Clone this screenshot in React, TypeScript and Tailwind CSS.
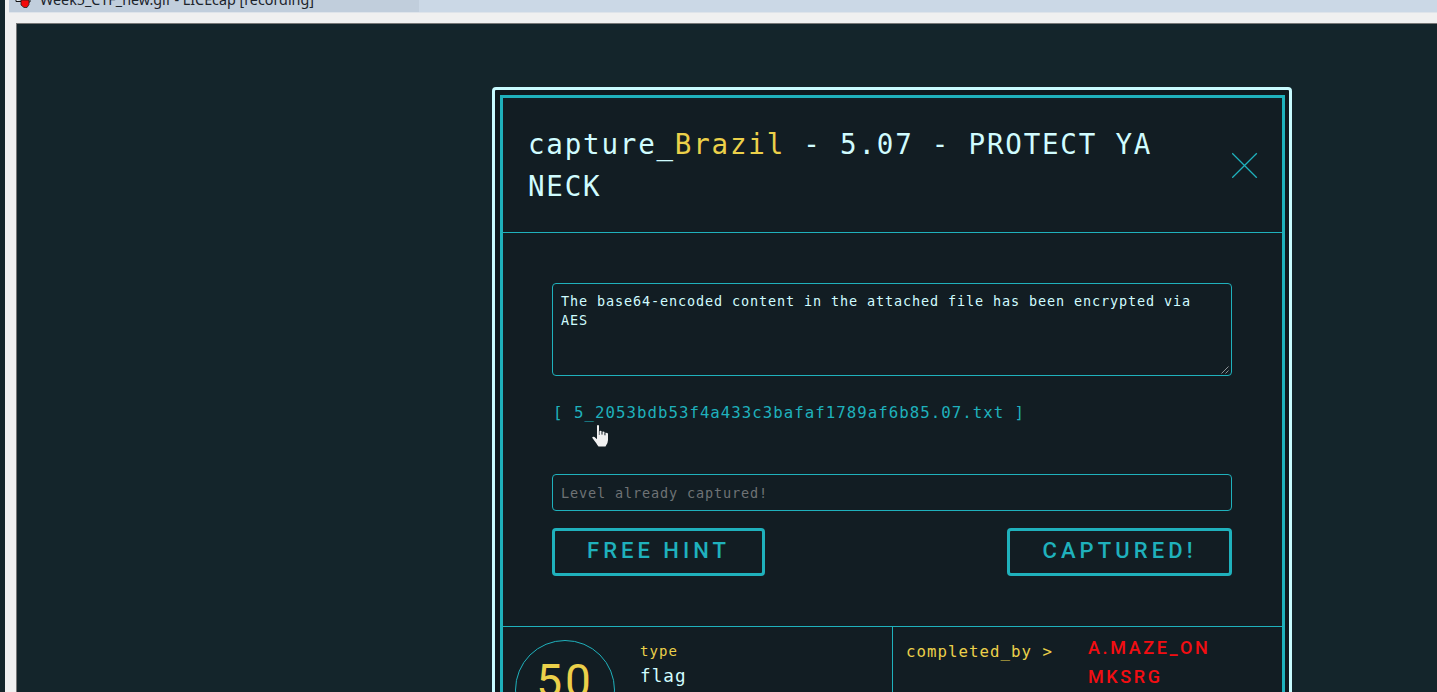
import type { ReactNode } from "react";

const mono = "font-['DejaVu_Sans_Mono','Liberation_Mono',monospace] tracking-[0.0647em]";
const display = "font-['Roboto','Liberation_Sans',sans-serif]";

function TitleBar() {
  return (
    <div className="flex h-[13px] shrink-0 overflow-hidden bg-[#cbd8e6] ml-1 border-b border-[#dfe4ea]">
      <div className="flex w-[410px] gap-[7px] bg-[#c1cedc] pl-[6px] font-['Noto_Sans',sans-serif]">
        <svg width="18" height="10" viewBox="0 0 18 10" className="shrink-0">
          <path d="M1 0v1.5h6M12 2h3V0" fill="#fff" stroke="#111" />
          <path d="M6 0h8v4.500L12 7.500H9L6 5z" fill="#f40a0a" stroke="#222" strokeWidth=".8" />
        </svg>
        <span className="mt-[-10px] h-[20px] whitespace-nowrap text-[14.320px] leading-[20px] text-[#1c232b]">
          Week5_CTF_new.gif - LICEcap [recording]
        </span>
      </div>
    </div>
  );
}

function OutlineButton({ children, width }: { children: ReactNode; width: string }) {
  return (
    <button className={`${width} ${display} h-12 rounded-[4px] border-[3px] border-[#1fb1bc] pb-[3px] text-[22px] leading-none font-medium whitespace-nowrap text-[#1fb1bc]`}>
      {children}
    </button>
  );
}

function HandCursor() {
  return (
    <svg width="17" height="22" viewBox="0 0 17 22" className="absolute top-[425px] left-[592px]">
      <path d="M5 1Q5 0 6 0t1 1v5.200Q8.500 5.300 9.700 6.200V9h.6V6.800q1.200-.7 2.300.2V10h.6V7.800q1.600-.4 2.800.8V15q0 3.500-2.500 6.400H6.500Q5 19.700 4.300 18.300L.2 12.700Q.6 11.300 2.500 12L5 14.300z" fill="#f1f1f1" />
      <path d="M7.300 5.800V10M10 6.500V10M13 7.500V10.500" stroke="#121d23" strokeWidth=".6" />
    </svg>
  );
}

export default function App() {
  return (
    <div className="relative flex h-[692px] w-[1437px] overflow-hidden bg-[#14252b]">
      <div className="ml-[5px] flex min-w-0 flex-1 flex-col bg-[#f0f0f0]">
        <TitleBar />
        <div className="mt-[10px] ml-[11px] flex-1 overflow-hidden border-t border-l border-[#777] bg-[#14252b] pt-[63px] pl-[475px]">
          <div className="h-[640px] w-[800px] rounded-[4px] border-[3px] border-[#c8fbff] bg-[#0f191e] pt-[5px] pr-1 pl-[5px]">
            <div className="h-[640px] border-[3px] border-[#1fb1bc] bg-[#121d23]">
              <header className="flex h-[135px] border-b border-[#1fb1bc] pt-[25px] pl-[25px]">
                <h1 className={`${mono} w-[680px] text-[27.540px] leading-[42px] text-[#d0fcff]`}>
                  capture_<span className="text-[#ebd04a]">Brazil</span> - 5.07 - PROTECT YA NECK
                </h1>
                <svg width="26" height="26" viewBox="0 0 26 26" className="mt-[29px] ml-[24px]" stroke="#1fb1bc" strokeWidth="1.3">
                  <path d="M.2 1.200l24.600 24.600M24.800 1.200L.2 25.800" />
                </svg>
              </header>
              <section className="flex h-[394px] flex-col border-b border-[#1fb1bc] px-[49px] pt-[50px]">
                <div className={`${mono} flex h-[93px] w-[680px] items-end justify-between rounded-[4px] border border-[#1fb1bc] pl-2 text-[13.500px] leading-[19px] text-[#d0fcff]`}>
                  <p className="w-[650px] self-start pt-[8px]">The base64-encoded content in the attached file has been encrypted via AES</p>
                  <svg width="9" height="9" viewBox="0 0 9 9" className="mr-px" stroke="#c4c8ca" strokeWidth=".7">
                    <path d="M.5 7.500l7-7M4.500 7.500l3-3" />
                  </svg>
                </div>
                <div className={`${mono} mt-[25px] h-6 pl-px whitespace-pre text-[15.740px] leading-6 text-[#1fb1bc]`}>[ 5_2053bdb53f4a433c3bafaf1789af6b85.07.txt ]</div>
                <div className={`${mono} mt-[49px] flex h-[37px] w-[680px] items-center rounded-[4px] border border-[#1fb1bc] pt-[2px] pl-2 text-[13.500px] text-[#6f7375]`}>
                  Level already captured!
                </div>
                <div className="mt-[17px] flex w-[680px] justify-between">
                  <OutlineButton width="w-[213px] tracking-[4px]">FREE HINT</OutlineButton>
                  <OutlineButton width="w-[225px] tracking-[4.100px]">CAPTURED!</OutlineButton>
                </div>
              </section>
              <section className="flex h-[150px]">
                <div className="flex w-[390px] border-r border-[#1fb1bc] pt-[13px] pl-3">
                  <div className={`${display} flex h-[100px] w-[100px] justify-center rounded-full border border-[#1fb1bc] pt-[17px] text-[46px] leading-[46px] tracking-[3px] text-[#ebd04a]`}>50</div>
                  <dl className={`${mono} ml-[25px]`}>
                    <dt className="h-[22px] text-[14px] leading-[22px] text-[#ebd04a]">type</dt>
                    <dd className="text-[17.600px] leading-[28px] text-[#d0fcff]">flag</dd>
                  </dl>
                </div>
                <div className="flex pt-[6px] pl-[13px]">
                  <div className={`${mono} w-[182px] pt-[7px] text-[15.740px] leading-6 text-[#ebd04a]`}>completed_by &gt;</div>
                  <ul className={`${display} text-[18px] leading-[29px] font-medium tracking-[2.600px] text-[#f30d12]`}>
                    <li>A.MAZE_ON</li>
                    <li>MKSRG</li>
                  </ul>
                </div>
              </section>
            </div>
          </div>
        </div>
      </div>
      <HandCursor />
    </div>
  );
}
